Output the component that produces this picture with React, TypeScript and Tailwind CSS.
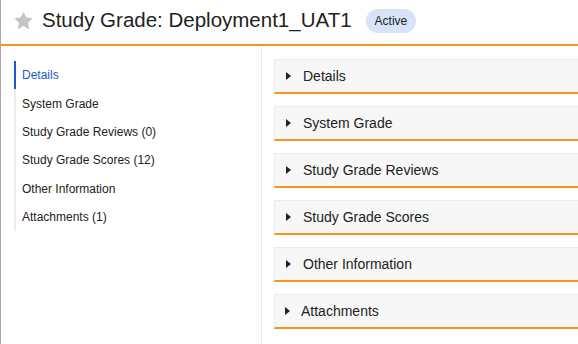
import { useState } from "react";

// ---- 資料 ----
const sections = [
  { id: "details", label: "Details", nav: "Details" },
  { id: "system-grade", label: "System Grade", nav: "System Grade" },
  { id: "reviews", label: "Study Grade Reviews", nav: "Study Grade Reviews (0)" },
  { id: "scores", label: "Study Grade Scores", nav: "Study Grade Scores (12)" },
  { id: "other", label: "Other Information", nav: "Other Information" },
  { id: "attachments", label: "Attachments", nav: "Attachments (1)" },
];

function StarIcon() {
  return (
    <svg width="21" height="19" viewBox="0 0 24 23" aria-hidden="true">
      <path
        d="M12 0.8l3.4 7.1 7.8 1-5.7 5.4 1.4 7.7L12 18.3 5.1 22l1.4-7.7L0.8 8.9l7.8-1z"
        fill="#c4c4c4"
      />
    </svg>
  );
}

function Caret() {
  return (
    <svg width="5" height="8" viewBox="0 0 5 8" aria-hidden="true">
      <path d="M0 0l5 4-5 4z" fill="#222" />
    </svg>
  );
}

export default function App() {
  const [active, setActive] = useState("details");

  return (
    <div
      className="w-[578px] h-[344px] overflow-hidden bg-white border-l border-[#a8a8a8] text-[#222]"
      style={{ fontFamily: '"Liberation Sans", Arial, sans-serif' }}
    >
      {/* ── 標題列 ─────────────────────────── */}
      <header className="h-[46px] flex items-center border-b-2 border-[#f7941d] pl-[12px] pb-[3px]">
        <StarIcon />
        <h1 className="ml-[8px] text-[20.5px] leading-none">
          Study Grade: Deployment1_UAT1
        </h1>
        <span className="ml-[14px] h-[24px] px-[9px] flex items-center rounded-full bg-[#d7e4f7] text-[12px]">
          Active
        </span>
      </header>

      <div className="flex">
        {/* ── 側邊導覽 ───────────────────────── */}
        <nav className="w-[261px] shrink-0 border-r border-[#ebebeb] h-[298px] pl-[13px] pt-[15px]">
          <ul className="border-l-2 border-[#ececec]">
            {sections.map((s) => (
              <li key={s.id}>
                <button
                  type="button"
                  onClick={() => setActive(s.id)}
                  className={[
                    "block w-full text-left h-[28.4px] pl-[6px] text-[12px] -ml-[2px] border-l-2",
                    active === s.id
                      ? "border-[#1a5bc4] text-[#1a5bc4]"
                      : "border-transparent text-[#222]",
                  ].join(" ")}
                >
                  {s.nav}
                </button>
              </li>
            ))}
          </ul>
        </nav>

        {/* ── 主要內容 ───────────────────────── */}
        <main className="flex-1 min-w-0 pl-[12px] pt-[13px] flex flex-col gap-[12px]">
          {sections.map((s, i) => (
            <section
              key={s.id}
              className="h-[35px] bg-[#f7f7f7] border-t border-l border-[#ebebeb] border-b-2 border-b-[#f7941d] flex items-center"
            >
              <span className={i === 5 ? "ml-[10px]" : "ml-[11px]"}>
                <Caret />
              </span>
              <span className={["text-[14px]", i === 5 ? "ml-[11px]" : "ml-[12px]"].join(" ")}>
                {s.label}
              </span>
            </section>
          ))}
        </main>
      </div>
    </div>
  );
}
